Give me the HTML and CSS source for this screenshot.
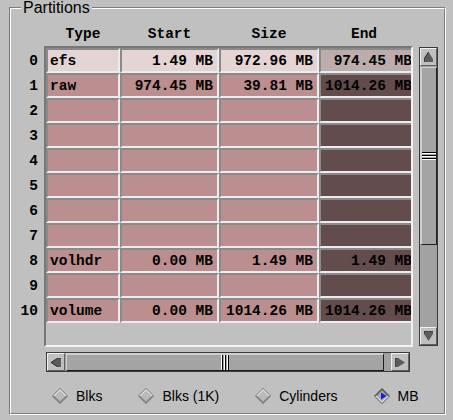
FILE: index.html
```html
<!DOCTYPE html>
<html>
<head>
<meta charset="utf-8">
<link rel="stylesheet" href="styles.css">
</head>
<body>
<div class="frame">
  <span class="legend">Partitions</span>
  <div class="frame-inner">
    <div class="hdr">
      <div class="hc w-type">Type</div>
      <div class="hc w-start">Start</div>
      <div class="hc w-size">Size</div>
      <div class="hc w-endh">End</div>
    </div>
    <div class="body">
      <div class="rowlabels">
        <div class="rl">0</div><div class="rl">1</div><div class="rl">2</div><div class="rl">3</div>
        <div class="rl">4</div><div class="rl">5</div><div class="rl">6</div><div class="rl">7</div>
        <div class="rl">8</div><div class="rl">9</div><div class="rl">10</div>
      </div>
      <div class="matrix">
        <div class="mrow sel"><div class="cell w-type">efs</div><div class="cell w-start num">1.49 MB</div><div class="cell w-size num">972.96 MB</div><div class="cell w-end num end">974.45 MB</div></div>
        <div class="mrow"><div class="cell w-type">raw</div><div class="cell w-start num">974.45 MB</div><div class="cell w-size num">39.81 MB</div><div class="cell w-end num end">1014.26 MB</div></div>
        <div class="mrow"><div class="cell w-type"></div><div class="cell w-start"></div><div class="cell w-size"></div><div class="cell w-end end"></div></div>
        <div class="mrow"><div class="cell w-type"></div><div class="cell w-start"></div><div class="cell w-size"></div><div class="cell w-end end"></div></div>
        <div class="mrow"><div class="cell w-type"></div><div class="cell w-start"></div><div class="cell w-size"></div><div class="cell w-end end"></div></div>
        <div class="mrow"><div class="cell w-type"></div><div class="cell w-start"></div><div class="cell w-size"></div><div class="cell w-end end"></div></div>
        <div class="mrow"><div class="cell w-type"></div><div class="cell w-start"></div><div class="cell w-size"></div><div class="cell w-end end"></div></div>
        <div class="mrow"><div class="cell w-type"></div><div class="cell w-start"></div><div class="cell w-size"></div><div class="cell w-end end"></div></div>
        <div class="mrow"><div class="cell w-type">volhdr</div><div class="cell w-start num">0.00 MB</div><div class="cell w-size num">1.49 MB</div><div class="cell w-end num end">1.49 MB</div></div>
        <div class="mrow"><div class="cell w-type"></div><div class="cell w-start"></div><div class="cell w-size"></div><div class="cell w-end end"></div></div>
        <div class="mrow"><div class="cell w-type">volume</div><div class="cell w-start num">0.00 MB</div><div class="cell w-size num">1014.26 MB</div><div class="cell w-end num end">1014.26 MB</div></div>
      </div>
      <div class="vscroll">
        <div class="btn vbtn"><svg width="9" height="10" viewBox="0 0 9 10"><polygon points="4.5,0 9,7 9,10 0,10 0,7" fill="#5c5c5c"/><polyline points="0,10 0,7 4.5,0" fill="none" stroke="#2a2a2a" stroke-width="1"/></svg></div>
        <div class="vtrough">
          <div class="vthumb"><div class="vgrip"></div></div>
        </div>
        <div class="btn vbtn"><svg width="9" height="10" viewBox="0 0 9 10"><polygon points="0,0 9,0 9,3 4.5,10 0,3" fill="#5c5c5c"/><polyline points="0,3 0,0 9,0" fill="none" stroke="#2a2a2a" stroke-width="1"/></svg></div>
      </div>
    </div>
    <div class="hscroll">
      <div class="btn hbtn"><svg width="10" height="9" viewBox="0 0 10 9"><polygon points="0,4.5 7,0 10,0 10,9 7,9" fill="#5c5c5c"/><polyline points="7,9 0,4.5 7,0 10,0" fill="none" stroke="#2a2a2a" stroke-width="1"/></svg></div>
      <div class="htrough">
        <div class="hthumb"><div class="hgrip"></div></div>
      </div>
      <div class="btn hbtn"><svg width="10" height="9" viewBox="0 0 10 9"><polygon points="10,4.5 3,0 0,0 0,9 3,9" fill="#5c5c5c"/><polyline points="0,9 0,0 3,0" fill="none" stroke="#2a2a2a" stroke-width="1"/></svg></div>
    </div>
    <div class="radios">
      <div class="radio"><svg width="16" height="16" viewBox="0 0 16 16"><polygon points="8,0 16,8 8,16 0,8" fill="#6e6e6e"/><polygon points="1,8 8,1 15,8" fill="#ececec"/><polygon points="1,8 8,15 15,8" fill="#8e8e8e"/><polygon points="8,2.5 13.5,8 8,13.5 2.5,8" fill="#b9b9b9"/></svg><span>Blks</span></div>
      <div class="radio"><svg width="16" height="16" viewBox="0 0 16 16"><polygon points="8,0 16,8 8,16 0,8" fill="#6e6e6e"/><polygon points="1,8 8,1 15,8" fill="#ececec"/><polygon points="1,8 8,15 15,8" fill="#8e8e8e"/><polygon points="8,2.5 13.5,8 8,13.5 2.5,8" fill="#b9b9b9"/></svg><span>Blks (1K)</span></div>
      <div class="radio"><svg width="16" height="16" viewBox="0 0 16 16"><polygon points="8,0 16,8 8,16 0,8" fill="#6e6e6e"/><polygon points="1,8 8,1 15,8" fill="#ececec"/><polygon points="1,8 8,15 15,8" fill="#8e8e8e"/><polygon points="8,2.5 13.5,8 8,13.5 2.5,8" fill="#b9b9b9"/></svg><span>Cylinders</span></div>
      <div class="radio"><svg width="16" height="16" viewBox="0 0 16 16"><polygon points="8,0 16,8 8,16 0,8" fill="#4a4a4a"/><polygon points="1,8 8,1 15,8" fill="#6a6a6a"/><polygon points="1,8 8,15 15,8" fill="#f0f0f0"/><polygon points="8,2.5 13.5,8 8,13.5 2.5,8" fill="#a9a9a9"/><polygon points="7,4.5 12.5,8 7,11.5" fill="#1a1ae6"/></svg><span>MB</span></div>
    </div>
  </div>
</div>
</body>
</html>
```

FILE: styles.css
```css
* { box-sizing: border-box; }
html, body { margin: 0; padding: 0; }
body {
  background: #c0c0c0;
  width: 453px;
  height: 420px;
  overflow: hidden;
  font-family: "Liberation Sans", Arial, sans-serif;
  color: #000;
}
.frame {
  position: relative;
  margin: 7px 0 0 9px;
  width: 437px;
  height: 408px;
  border: 1px solid;
  border-color: #7d7d7d #fff #fff #7d7d7d;
}
.frame-inner {
  height: 100%;
  border: 1px solid;
  border-color: #fff #7d7d7d #7d7d7d #fff;
  display: flex;
  flex-direction: column;
}
.legend {
  position: absolute;
  left: 11px;
  top: -8px;
  padding: 0 2px;
  background: #c0c0c0;
  font-size: 16px;
  line-height: 16px;
}
.hdr, .rowlabels, .matrix {
  font-family: "Liberation Mono", "DejaVu Sans Mono", monospace;
  font-weight: bold;
  font-size: 14.5px;
}
.hdr {
  height: 37px;
  flex-shrink: 0;
  display: flex;
  align-items: flex-end;
  padding-left: 35px;
}
.hc {
  flex-shrink: 0;
  text-align: center;
  line-height: 24px;
}
.w-type { width: 74px; }
.w-start { width: 99px; }
.w-size { width: 100px; }
.w-end { width: 99px; }
.w-endh { width: 90px; }
.body {
  display: flex;
  height: 301px;
  flex-shrink: 0;
}
.rowlabels {
  width: 33px;
  padding-top: 2px;
  flex-shrink: 0;
}
.rl {
  height: 25px;
  padding: 2px 6px 0 0;
  line-height: 23px;
  text-align: right;
}
.matrix {
  width: 369px;
  height: 301px;
  flex-shrink: 0;
  border: 2px solid;
  border-color: #777 #f2f2f2 #f2f2f2 #777;
  overflow: hidden;
}
.mrow {
  display: flex;
  height: 25px;
}
.cell {
  flex-shrink: 0;
  height: 25px;
  border: 2px solid;
  border-color: #8a8a8a #ececec #ececec #8a8a8a;
  padding: 2px 4px 0 2px;
  line-height: 19px;
  white-space: nowrap;
  overflow: hidden;
  background: #bb8f8f;
}
.cell.num { text-align: right; }
.cell.end { background: #624c4c; }
.sel .cell { background: #e4d4d4; }
.sel .cell.end { background: #bcacac; }

.vscroll {
  margin: 1px 0 0 6px;
  width: 19px;
  height: 299px;
  flex-shrink: 0;
  border: 1px solid #3a3a3a;
  background: #a2a2a2;
  display: flex;
  flex-direction: column;
}
.btn {
  flex-shrink: 0;
  background: #c0c0c0;
  border: 1px solid;
  border-color: #f2f2f2 #606060 #606060 #f2f2f2;
  display: flex;
  align-items: center;
  justify-content: center;
}
.vbtn { height: 18px; }
.vtrough {
  flex: 1;
  padding-top: 1px;
}
.vthumb {
  height: 178px;
  border: 1px solid;
  border-color: #cfcfcf #1e1e1e #1e1e1e #cfcfcf;
  border-left-width: 2px;
  background: #a4a4a4;
  display: flex;
  flex-direction: column;
  justify-content: center;
}
.vgrip {
  height: 8px;
  background: repeating-linear-gradient(to bottom, #000 0 1px, #fff 1px 2px, transparent 2px 3px);
}
.hscroll {
  margin: 5px 0 0 35px;
  width: 364px;
  height: 20px;
  flex-shrink: 0;
  border: 1px solid #3a3a3a;
  background: #a2a2a2;
  display: flex;
}
.hbtn { width: 18px; }
.htrough {
  flex: 1;
  padding-left: 1px;
}
.hthumb {
  width: 318px;
  height: 100%;
  border: 1px solid;
  border-color: #cfcfcf #1e1e1e #1e1e1e #cfcfcf;
  border-top-width: 2px;
  background: #a4a4a4;
  display: flex;
  justify-content: center;
}
.hgrip {
  width: 8px;
  background: repeating-linear-gradient(to right, #fff 0 1px, #000 1px 2px, transparent 2px 3px);
}
.radios {
  flex: 1;
  display: flex;
  align-items: center;
  padding: 6px 0 0 41px;
  gap: 36px;
  font-size: 14px;
}
.radio {
  display: flex;
  align-items: center;
  gap: 8px;
}
.radio svg { flex-shrink: 0; display: block; }
.radio span { padding-top: 1px; }
```
